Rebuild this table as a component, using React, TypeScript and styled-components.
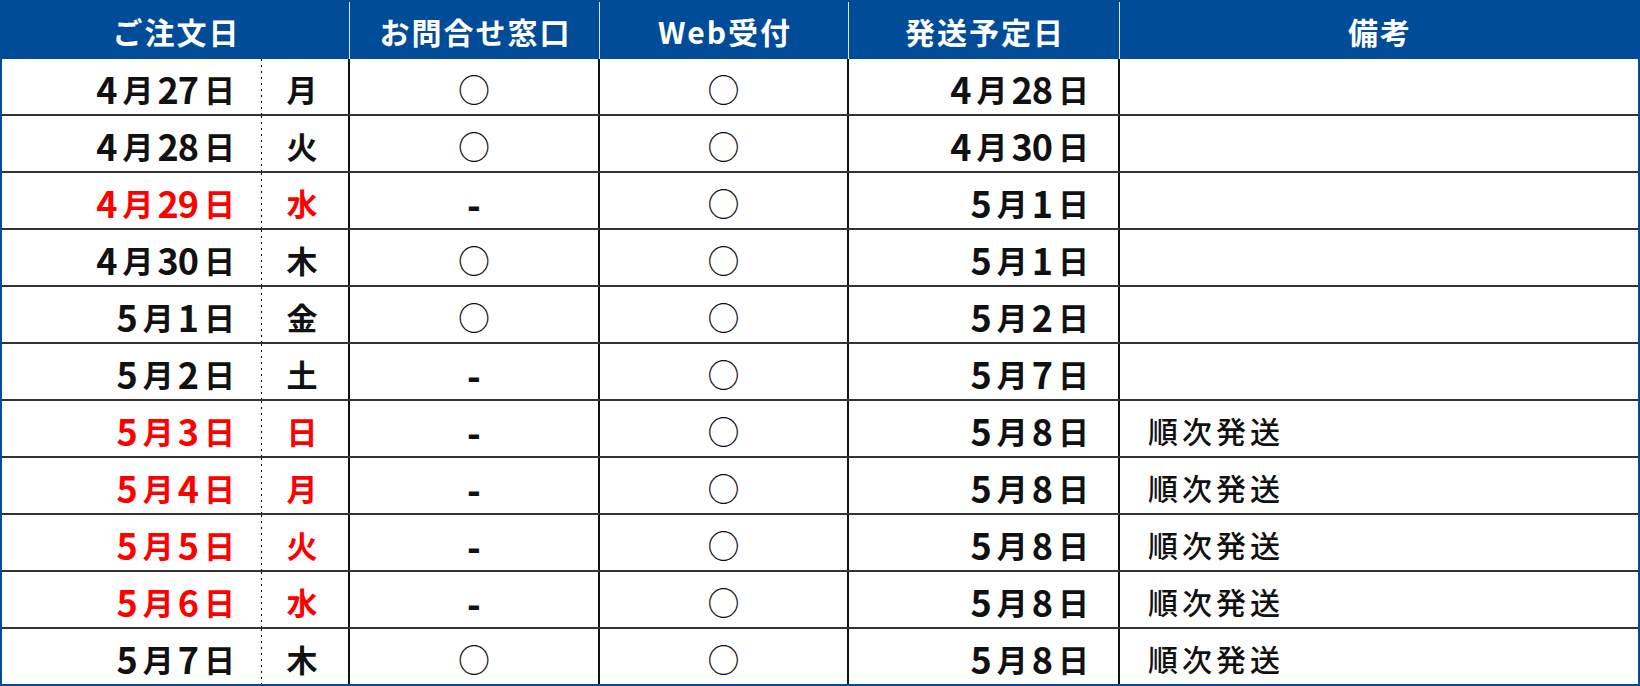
import styled, { createGlobalStyle } from "styled-components";

const GlobalStyle = createGlobalStyle`
  html, body {
    margin: 0;
    padding: 0;
    background: #ffffff;
  }
  body {
    font-family: "Noto Sans CJK JP", "Noto Sans", sans-serif;
    color: #111111;
  }
`;

const BLUE = "#004c98";
const RED = "#ff0000";
const BODY_COLUMNS = "260px 88px 250px 249px 271px 1fr";

const Frame = styled.div`
  width: 1640px;
  height: 686px;
  box-sizing: border-box;
  border: 2px solid ${BLUE};
  display: flex;
  flex-direction: column;
  background: #ffffff;
`;

const HeaderRow = styled.div`
  flex: none;
  height: 57px;
  display: grid;
  grid-template-columns: 347px 250px 249px 271px 1fr;
  background: ${BLUE};
`;

const HeadCell = styled.div`
  display: flex;
  align-items: center;
  justify-content: center;
  color: #ffffff;
  font-size: 30px;
  font-weight: 700;
  letter-spacing: 2px;
  padding-left: 2px;

  & + & {
    border-left: 1px solid #dfe6f0;
  }
`;

const Body = styled.div`
  flex: 1;
  display: flex;
  flex-direction: column;
`;

const Row = styled.div`
  flex: 1 1 0;
  min-height: 0;
  display: grid;
  grid-template-columns: ${BODY_COLUMNS};
  border-bottom: 2px solid #333333;

  &:last-child {
    border-bottom: none;
  }
`;

const Cell = styled.div<{ $red?: boolean }>`
  display: flex;
  align-items: center;
  box-sizing: border-box;
  padding-top: 3px;
  color: ${(p) => (p.$red ? RED : "#111111")};
  font-weight: 700;
  white-space: nowrap;
  border-right: 2px solid #111111;
`;

/* dotted divider between date and weekday: 2px dot, 4px gap */
const DateCell = styled(Cell)`
  justify-content: flex-end;
  padding-right: 23px;
  border-right: none;
  background-image: repeating-linear-gradient(
    to bottom,
    #000000 0 2px,
    transparent 2px 6px
  );
  background-size: 1px 100%;
  background-position: right top;
  background-repeat: no-repeat;
`;

const DayCell = styled(Cell)`
  justify-content: center;
  padding-right: 6px;
  font-size: 31px;
`;

const MarkCell = styled(Cell)`
  justify-content: center;
  font-size: 32px;
  font-weight: 400;
`;

const Dash = styled.span`
  font-size: 36px;
  font-weight: 900;
  position: relative;
  top: 1px;
`;

const ShipCell = styled(Cell)`
  justify-content: flex-end;
  padding-right: 25px;
`;

const NoteCell = styled(Cell)`
  border-right: none;
  padding-left: 28px;
  font-size: 30px;
  font-weight: 500;
  letter-spacing: 4px;
`;

const Num = styled.span`
  font-size: 36px;
  letter-spacing: -1px;
  vertical-align: -2px;
`;

const Unit = styled.span`
  font-size: 31px;
  margin: 0 4px 0 6px;
`;

const DateText = ({ value }: { value: string }) => (
  <span>
    {value.match(/\d+|\D/g)!.map((part, i) =>
      /\d/.test(part) ? (
        <Num key={i}>{part}</Num>
      ) : (
        <Unit key={i}>{part}</Unit>
      )
    )}
  </span>
);

type Entry = {
  date: string;
  day: string;
  counter: boolean;
  ship: string;
  note?: string;
  holiday?: boolean;
};

const rows: Entry[] = [
  { date: "4月27日", day: "月", counter: true, ship: "4月28日" },
  { date: "4月28日", day: "火", counter: true, ship: "4月30日" },
  { date: "4月29日", day: "水", counter: false, ship: "5月1日", holiday: true },
  { date: "4月30日", day: "木", counter: true, ship: "5月1日" },
  { date: "5月1日", day: "金", counter: true, ship: "5月2日" },
  { date: "5月2日", day: "土", counter: false, ship: "5月7日" },
  { date: "5月3日", day: "日", counter: false, ship: "5月8日", note: "順次発送", holiday: true },
  { date: "5月4日", day: "月", counter: false, ship: "5月8日", note: "順次発送", holiday: true },
  { date: "5月5日", day: "火", counter: false, ship: "5月8日", note: "順次発送", holiday: true },
  { date: "5月6日", day: "水", counter: false, ship: "5月8日", note: "順次発送", holiday: true },
  { date: "5月7日", day: "木", counter: true, ship: "5月8日", note: "順次発送" },
];

export default function App() {
  return (
    <>
      <GlobalStyle />
      <Frame>
        <HeaderRow>
          <HeadCell>ご注文日</HeadCell>
          <HeadCell>お問合せ窓口</HeadCell>
          <HeadCell>Web受付</HeadCell>
          <HeadCell>発送予定日</HeadCell>
          <HeadCell>備考</HeadCell>
        </HeaderRow>
        <Body>
          {rows.map((r) => (
            <Row key={r.date}>
              <DateCell $red={r.holiday}>
                <DateText value={r.date} />
              </DateCell>
              <DayCell $red={r.holiday}>{r.day}</DayCell>
              <MarkCell>{r.counter ? "○" : <Dash>-</Dash>}</MarkCell>
              <MarkCell>○</MarkCell>
              <ShipCell>
                <DateText value={r.ship} />
              </ShipCell>
              <NoteCell>{r.note}</NoteCell>
            </Row>
          ))}
        </Body>
      </Frame>
    </>
  );
}
